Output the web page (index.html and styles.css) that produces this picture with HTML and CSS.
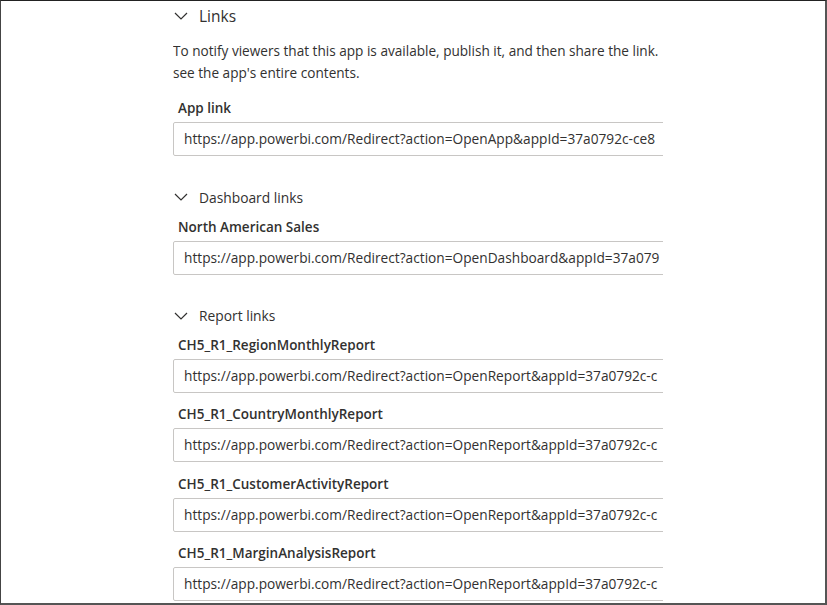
FILE: index.html
```html
<!DOCTYPE html>
<html>
<head>
<meta charset="utf-8">
<link rel="stylesheet" href="styles.css">
</head>
<body>
<div class="frame">
  <div class="panel">
    <div class="sec-head main">
      <svg class="chev" width="14" height="8" viewBox="0 0 14 8"><path d="M1 1 L7 7 L13 1" fill="none" stroke="#323130" stroke-width="1.2"/></svg>
      <span>Links</span>
    </div>
    <p class="desc">To notify viewers that this app is available, publish it, and then share the link.<br>see the app's entire contents.</p>

    <div class="field first">
      <div class="label">App link</div>
      <div class="input">https://app.powerbi.com/Redirect?action=OpenApp&amp;appId=37a0792c-ce8</div>
    </div>

    <div class="sec-head sub">
      <svg class="chev" width="14" height="8" viewBox="0 0 14 8"><path d="M1 1 L7 7 L13 1" fill="none" stroke="#323130" stroke-width="1.2"/></svg>
      <span>Dashboard links</span>
    </div>
    <div class="field">
      <div class="label">North American Sales</div>
      <div class="input">https://app.powerbi.com/Redirect?action=OpenDashboard&amp;appId=37a079</div>
    </div>

    <div class="sec-head sub">
      <svg class="chev" width="14" height="8" viewBox="0 0 14 8"><path d="M1 1 L7 7 L13 1" fill="none" stroke="#323130" stroke-width="1.2"/></svg>
      <span>Report links</span>
    </div>
    <div class="field">
      <div class="label">CH5_R1_RegionMonthlyReport</div>
      <div class="input">https://app.powerbi.com/Redirect?action=OpenReport&amp;appId=37a0792c-c</div>
    </div>
    <div class="field">
      <div class="label">CH5_R1_CountryMonthlyReport</div>
      <div class="input">https://app.powerbi.com/Redirect?action=OpenReport&amp;appId=37a0792c-c</div>
    </div>
    <div class="field">
      <div class="label">CH5_R1_CustomerActivityReport</div>
      <div class="input">https://app.powerbi.com/Redirect?action=OpenReport&amp;appId=37a0792c-c</div>
    </div>
    <div class="field">
      <div class="label">CH5_R1_MarginAnalysisReport</div>
      <div class="input">https://app.powerbi.com/Redirect?action=OpenReport&amp;appId=37a0792c-c</div>
    </div>
  </div>
</div>
</body>
</html>
```
FILE: styles.css
```css
* { box-sizing: border-box; }
html, body { margin: 0; padding: 0; background: #fff; }
body {
  font-family: "Open Sans", "Noto Sans", sans-serif;
  color: #323130;
  width: 827px;
  height: 605px;
  overflow: hidden;
}
.frame {
  width: 827px;
  height: 605px;
  border-top: 1px solid #222;
  border-left: 1px solid #444;
  border-right: 2px solid #555;
  border-bottom: 2px solid #555;
  overflow: hidden;
  background: #fff;
}
.panel {
  margin-left: 172px;
  width: 490px;
  overflow: hidden;
  display: flex;
  flex-direction: column;
}
.sec-head {
  display: flex;
  align-items: center;
  gap: 11px;
  padding-left: 1px;
  white-space: nowrap;
}
.sec-head.main {
  height: 22px;
  margin-top: 4px;
  font-size: 15.5px;
}
.sec-head.sub {
  height: 20px;
  margin-top: 31px;
  font-size: 13.8px;
  font-weight: 500;
}
.chev { flex: none; }
.desc {
  margin: 13px 0 0 0;
  font-size: 13.6px;
  line-height: 22px;
  white-space: nowrap;
}
.field {
  display: flex;
  flex-direction: column;
  margin-top: 11.3px;
}
.sec-head.sub + .field { margin-top: 9.5px; }
.field.first { margin-top: 14px; }
.label {
  height: 20px;
  line-height: 20px;
  font-size: 13.5px;
  font-weight: 600;
  padding-left: 5px;
  white-space: nowrap;
}
.input {
  margin-top: 4px;
  width: 620px;
  height: 34px;
  line-height: 32px;
  border: 1px solid #c8c6c4;
  border-radius: 2px;
  padding-left: 10px;
  font-size: 13.7px;
  white-space: nowrap;
  overflow: hidden;
}
```
